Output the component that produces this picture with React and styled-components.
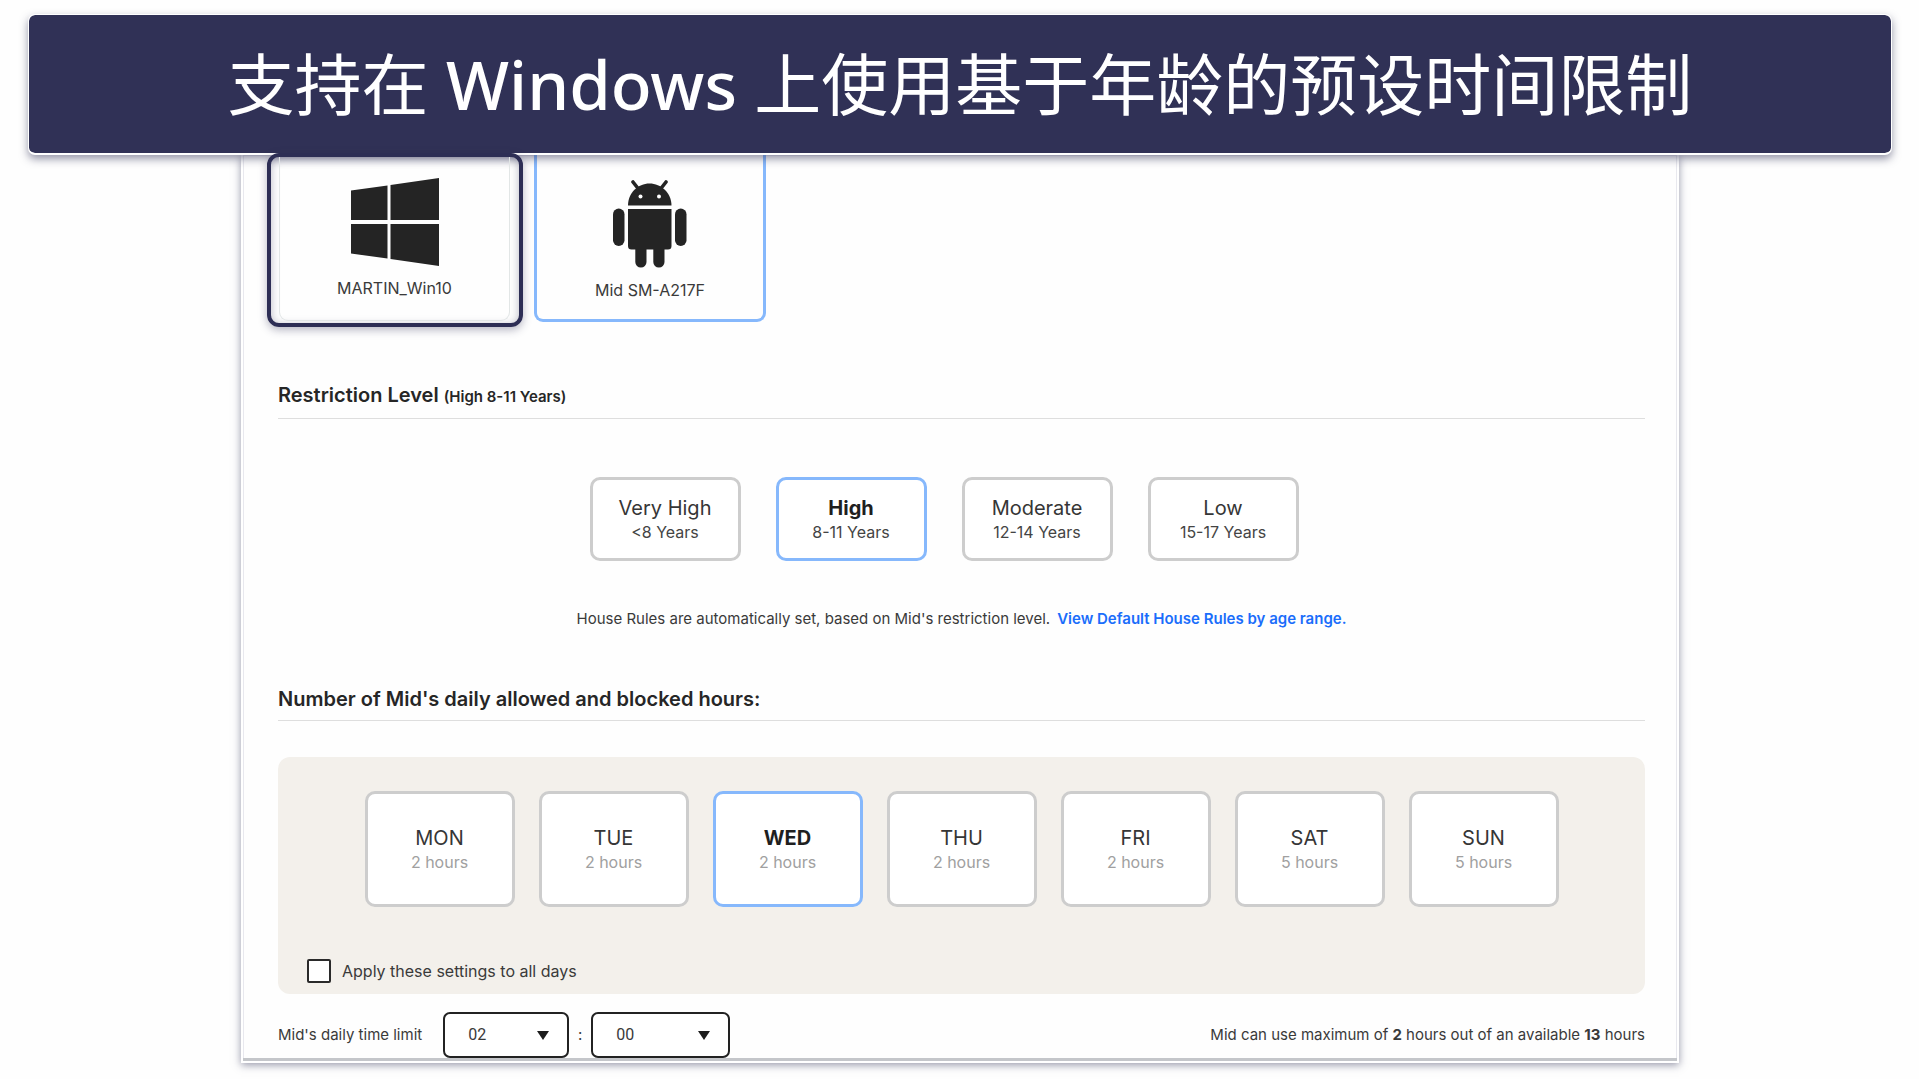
import React, { useState } from "react";
import styled, { createGlobalStyle } from "styled-components";

const levels = [
    { name: "Very High", age: "<8 Years" },
    { name: "High", age: "8-11 Years" },
    { name: "Moderate", age: "12-14 Years" },
    { name: "Low", age: "15-17 Years" },
];

const days = [
    { name: "MON", hours: 2 },
    { name: "TUE", hours: 2 },
    { name: "WED", hours: 2 },
    { name: "THU", hours: 2 },
    { name: "FRI", hours: 2 },
    { name: "SAT", hours: 5 },
    { name: "SUN", hours: 5 },
];

const pad = (n) => String(n).padStart(2, "0");
const hourOptions = Array.from({ length: 24 }, (_, i) => pad(i));
const minuteOptions = ["00", "15", "30", "45"];

const WindowsIcon = () => (
    <svg width="88" height="88" viewBox="0 0 88 88" fill="#242424" aria-hidden="true">
        <path d="M0 12.5 36.5 7.4V42H0zM39.5 7 88 0v42H39.5zM0 46h36.5v34.6L0 75.5zM39.5 46H88v42l-48.5-7z" />
    </svg>
);

const AndroidIcon = () => (
    <svg width="74" height="88" viewBox="0 0 74 88" fill="#242424" aria-hidden="true">
        <path d="M20 2l5.5 7M53 2l-5.5 7" stroke="#242424" strokeWidth="3.6" strokeLinecap="round" />
        <path d="M15 25.5C15 13 25 3.500 36.500 3.500S58.500 13 58.500 25.500z" />
        <path d="M15 29h43.500v37a3.500 3.500 0 0 1-3.500 3.500H51.500V82a5.600 5.600 0 0 1-11.200 0V69.500H33.500V82a5.600 5.600 0 0 1-11.200 0V69.500H18.500A3.500 3.500 0 0 1 15 66z" />
        <rect x="0" y="28.5" width="11.5" height="37.5" rx="5.75" />
        <rect x="62" y="28.5" width="11.5" height="37.5" rx="5.75" />
        <circle cx="27.5" cy="16.5" r="2" fill="#fff" />
        <circle cx="46" cy="16.5" r="2" fill="#fff" />
    </svg>
);

const App = () => {
    const [level, setLevel] = useState("High");
    const [day, setDay] = useState("WED");

    return (
        <>
            <GlobalStyle />
            <Page>
                <Banner>
                    <span>
                        支持在 <b>Windows</b> 上使用基于年龄的预设时间限制
                    </span>
                </Banner>
                <Panel>
                    <Devices>
                        <Highlight>
                            <Device>
                                <WindowsIcon />
                                MARTIN_Win10
                            </Device>
                        </Highlight>
                        <Device>
                            <AndroidIcon />
                            Mid SM-A217F
                        </Device>
                    </Devices>

                    <Heading>
                        Restriction Level <small>(High 8-11 Years)</small>
                    </Heading>
                    <Levels>
                        {levels.map(({ name, age }) => (
                            <Option key={name} $active={name === level} aria-pressed={name === level} onClick={() => setLevel(name)}>
                                <strong>{name}</strong>
                                <span>{age}</span>
                            </Option>
                        ))}
                    </Levels>
                    <Hint>
                        House Rules are automatically set, based on Mid's restriction level.
                        <a href="#rules">View Default House Rules by age range.</a>
                    </Hint>

                    <Heading>Number of Mid's daily allowed and blocked hours:</Heading>
                    <Schedule>
                        <Days>
                            {days.map(({ name, hours }) => (
                                <Option key={name} $tall $active={name === day} aria-pressed={name === day} onClick={() => setDay(name)}>
                                    <strong>{name}</strong>
                                    <span>{hours} hours</span>
                                </Option>
                            ))}
                        </Days>
                        <CheckLabel>
                            <Checkbox />
                            Apply these settings to all days
                        </CheckLabel>
                    </Schedule>

                    <LimitRow>
                        <label htmlFor="limit-hours">Mid's daily time limit</label>
                        <SelectBox $width="126px">
                            <select id="limit-hours" defaultValue="02">
                                {hourOptions.map((v) => (
                                    <option key={v}>{v}</option>
                                ))}
                            </select>
                            <Caret />
                        </SelectBox>
                        <Colon>:</Colon>
                        <SelectBox $width="139px">
                            <select aria-label="Minutes" defaultValue="00">
                                {minuteOptions.map((v) => (
                                    <option key={v}>{v}</option>
                                ))}
                            </select>
                            <Caret />
                        </SelectBox>
                        <Summary>
                            Mid can use maximum of <b>2</b> hours out of an available <b>13</b> hours
                        </Summary>
                    </LimitRow>
                </Panel>
            </Page>
        </>
    );
};

export default App;

const Caret = () => (
    <svg width="12" height="9" viewBox="0 0 12 9" fill="#1c1c1c" aria-hidden="true">
        <path d="M0 0h12L6 9z" />
    </svg>
);

const GlobalStyle = createGlobalStyle`
    * {
        box-sizing: border-box;
    }

    body {
        margin: 0;
        background: #fefefe;
        color: #3a3a3a;
        font-family: Inter, "Liberation Sans", sans-serif;
        font-size: 16px;
        line-height: 24px;
    }

    button, select {
        font: inherit;
        color: inherit;
    }
`;

const Page = styled.div`
    padding: 14px 27px 16px 28px;
`;

/* sits above the panel so that its shadow falls on it */
const Banner = styled.h1`
    position: relative;
    z-index: 1;
    margin: 0;
    height: 141px;
    display: flex;
    align-items: center;
    justify-content: center;
    border: 1px solid #fff;
    border-bottom-width: 2px;
    border-radius: 7px;
    background: #303156;
    background-clip: padding-box;
    box-shadow: 0 4px 9px rgba(48, 49, 86, 0.5);
    color: #fff;
    font-family: "Noto Sans", "Noto Sans CJK SC", sans-serif;
    font-size: 67px;
    font-weight: 400;
    line-height: 96px;
    white-space: nowrap;

    b {
        font-weight: 500;
    }
`;

const Panel = styled.main`
    margin: 0 213px;
    padding: 0 32px 0 35px;
    border: 2px solid #fff;
    border-top: 0;
    background: #fefefe;
    box-shadow: 0 2px 8px rgba(48, 49, 86, 0.5), inset 0 -3px 0 #c4c6ca, inset 0 0 0 1px #e8e8ee;
`;

const Devices = styled.div`
    display: flex;
    align-items: flex-start;
    gap: 11px;
    margin-left: -11px;
`;

const Highlight = styled.div`
    position: relative;
    z-index: 2;
    width: 256px;
    height: 174px;
    margin-top: -2px;
    padding: 0 9px 2px 8px;
    border: 4px solid #2d2e55;
    border-radius: 12px;
    box-shadow: 0 3px 8px rgba(48, 49, 86, 0.35), inset 0 2px 8px rgba(48, 49, 86, 0.35);
`;

const Device = styled.button`
    width: 232px;
    height: 167px;
    display: flex;
    flex-direction: column;
    align-items: center;
    justify-content: flex-end;
    gap: 10px;
    padding: 0 0 17px;
    border: 3px solid #86b8fc;
    border-top: 0;
    border-radius: 0 0 9px 9px;
    background: #fefefe;

    ${Highlight} & {
        width: 100%;
        height: 100%;
        padding-bottom: 20px;
        border: 1px solid #e2e6e6;
        border-top: 0;
        background: transparent;
    }
`;

const Heading = styled.h2`
    margin: 0;
    padding-bottom: 8px;
    border-bottom: 1px solid #dedede;
    color: #262626;
    font-size: 20px;
    font-weight: 600;
    line-height: 26px;

    small {
        font-size: 15px;
    }

    ${Devices} + & {
        margin-top: 55px;
    }
`;

const Levels = styled.div`
    display: flex;
    justify-content: center;
    gap: 35px;
    padding-right: 35px;
    margin-top: 58px;
`;

const Option = styled.button`
    width: ${(props) => (props.$tall ? "150px" : "151px")};
    height: ${(props) => (props.$tall ? "116px" : "84px")};
    padding: 2px 0 0;
    border: 3px solid ${(props) => (props.$active ? "#86b8fc" : "#cdcdcd")};
    border-radius: 10px;
    background: #fff;

    strong, span {
        display: block;
    }

    strong {
        color: ${(props) => (props.$active ? "#1f1f1f" : "#363636")};
        font-size: 20px;
        font-weight: ${(props) => (props.$active ? 700 : 400)};
    }

    span {
        color: ${(props) => (props.$tall ? "#a0a0a0" : "#444")};
    }
`;

const Hint = styled.p`
    margin: 46px 0 55px;
    font-size: 15px;
    text-align: center;

    a {
        margin-left: 7px;
        color: #1a6dfb;
        font-weight: 600;
        text-decoration: none;
    }
`;

const Schedule = styled.section`
    margin-top: 36px;
    padding: 34px 29px 11px;
    border-radius: 12px;
    background: #f3f0eb;
`;

const Days = styled.div`
    display: flex;
    justify-content: center;
    gap: 24px;
    margin-bottom: 52px;
`;

const CheckLabel = styled.label`
    display: flex;
    align-items: center;
    gap: 11px;
`;

const Checkbox = styled.input.attrs({ type: "checkbox" })`
    appearance: none;
    width: 24px;
    height: 24px;
    margin: 0;
    border: 2px solid #2a2a2a;
    border-radius: 2px;
    background: #fff;

    &:checked {
        background: #2a2a2a;
    }
`;

const LimitRow = styled.div`
    display: flex;
    align-items: center;
    padding: 18px 0 3px;
    font-size: 15px;

    label {
        margin-right: 21px;
    }
`;

const SelectBox = styled.div`
    display: grid;
    align-items: center;
    width: ${(props) => props.$width};

    select, svg {
        grid-area: 1 / 1;
    }

    select {
        appearance: none;
        width: 100%;
        height: 46px;
        padding: 0 23px;
        border: 2px solid #222;
        border-radius: 7px;
        background: #fff;
        font-family: Roboto, sans-serif;
        font-size: 16px;
    }

    svg {
        justify-self: end;
        margin-right: 20px;
        pointer-events: none;
    }
`;

const Colon = styled.span`
    width: 22px;
    text-align: center;
`;

const Summary = styled.span`
    margin-left: auto;
`;
